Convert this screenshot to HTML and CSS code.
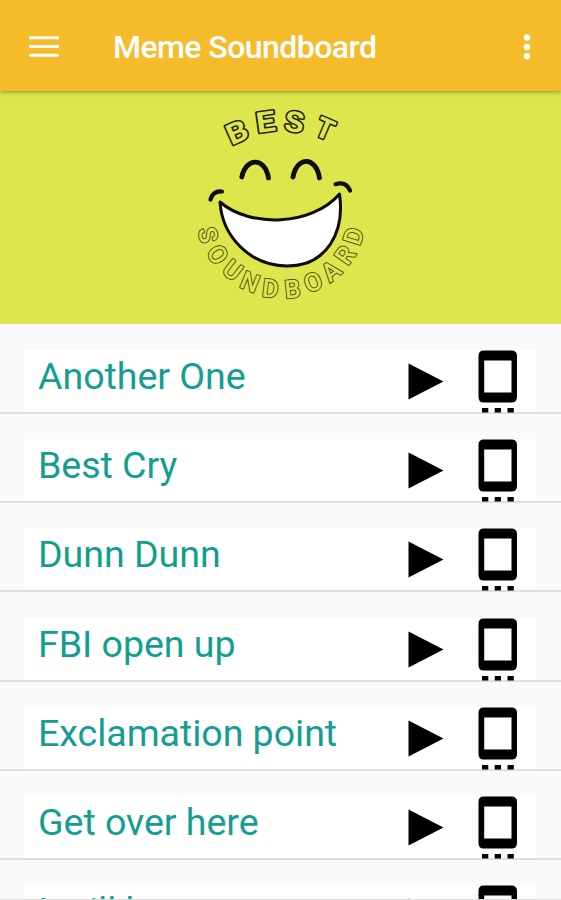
FILE: index.html
```html
<!DOCTYPE html>
<html lang="en">
<head>
    <meta charset="UTF-8">
    <meta name="viewport" content="width=device-width, initial-scale=1.0">
    <title>Meme Soundboard</title>
    <link rel="stylesheet" href="styles.css">
</head>
<body>

    <!-- Icons -->
    <svg class="icon-defs">
        <symbol id="play" viewBox="0 0 36 37">
            <path d="M0.5 0.5 L35.5 18.5 L0.5 36.5 Z"/>
        </symbol>
        <symbol id="phone" viewBox="0 0 40 63">
            <path fill-rule="evenodd" d="M5.5 0.5 H33.5 Q39 0.5 39 6 V47 Q39 52.5 33.5 52.5 H5.5 Q0.5 52.5 0.5 47 V6 Q0.5 0.5 5.5 0.5 Z M6.2 10.5 V42.5 H33.5 V10.5 Z"/>
            <path d="M4 58h6.3v4.5h-6.3z M16.7 58h6.3v4.5h-6.3z M29.5 58h6.3v4.5h-6.3z"/>
        </symbol>
    </svg>

    <!-- Top Bar -->
    <header class="topbar">
        <svg class="menu" viewBox="0 0 30 22">
            <path d="M1.3 1.8H28.7M1.3 10.6H28.7M1.3 19.2H28.7"/>
        </svg>
        <h1>Meme Soundboard</h1>
        <svg class="more" viewBox="0 0 8 26">
            <circle cx="4" cy="3.5" r="3.2"/>
            <circle cx="4" cy="13" r="3.2"/>
            <circle cx="4" cy="22.3" r="3.2"/>
        </svg>
    </header>

    <!-- Logo -->
    <div class="banner">
        <svg viewBox="0 91 561 233">
            <g class="best">
                <text transform="translate(237 132) rotate(-24) scale(1.15 1)" y="10.2">B</text>
                <text transform="translate(265.5 121.5) rotate(-8) scale(1.2 1)" y="10.2">E</text>
                <text transform="translate(294.5 121.5) rotate(6) scale(1.1 1)" y="10.2">S</text>
                <text transform="translate(325 128.5) rotate(23)" y="10.2">T</text>
            </g>
            <g class="soundboard">
                <text transform="translate(208 235) rotate(77)" y="8.8">S</text>
                <text transform="translate(217.5 254.5) rotate(56)" y="8.8">O</text>
                <text transform="translate(232.5 270) rotate(38)" y="8.8">U</text>
                <text transform="translate(250 282) rotate(22)" y="8.8">N</text>
                <text transform="translate(270.5 288.5) rotate(7)" y="8.8">D</text>
                <text transform="translate(292.5 289) rotate(-6)" y="8.8">B</text>
                <text transform="translate(313 282) rotate(-23)" y="8.8">O</text>
                <text transform="translate(331 271) rotate(-39)" y="8.8">A</text>
                <text transform="translate(345 255) rotate(-55)" y="8.8">R</text>
                <text transform="translate(353.5 236) rotate(-73)" y="8.8">D</text>
            </g>
            <g class="face">
                <path d="M241.8 177C246 157 265 157 268.5 178"/>
                <path d="M293 177C297 156 316 156 319.5 178"/>
                <path class="cheek" d="M210.5 199.5Q213 190.5 222 191.5"/>
                <path class="cheek" d="M335.5 184.2Q346 181 350 190.5"/>
                <path class="mouth" d="M220 202C250 228 312 226 339.5 194C345 232 327 266 287 266C250 266 222 236 220 202Z"/>
            </g>
        </svg>
    </div>

    <!-- Sound List -->
    <ul class="sounds">
        <li><div class="sound"><span>Another One</span><svg class="play"><use href="#play"/></svg><svg class="phone"><use href="#phone"/></svg></div></li>
        <li><div class="sound"><span>Best Cry</span><svg class="play"><use href="#play"/></svg><svg class="phone"><use href="#phone"/></svg></div></li>
        <li><div class="sound"><span>Dunn Dunn</span><svg class="play"><use href="#play"/></svg><svg class="phone"><use href="#phone"/></svg></div></li>
        <li><div class="sound"><span>FBI open up</span><svg class="play"><use href="#play"/></svg><svg class="phone"><use href="#phone"/></svg></div></li>
        <li><div class="sound"><span>Exclamation point</span><svg class="play"><use href="#play"/></svg><svg class="phone"><use href="#phone"/></svg></div></li>
        <li><div class="sound"><span>Get over here</span><svg class="play"><use href="#play"/></svg><svg class="phone"><use href="#phone"/></svg></div></li>
        <li><div class="sound"><span>I still here</span><svg class="play"><use href="#play"/></svg><svg class="phone"><use href="#phone"/></svg></div></li>
    </ul>

</body>
</html>
```

FILE: styles.css
```css
/* Base Styling */
* {
    box-sizing: border-box;
}

body {
    font-family: Roboto, 'Liberation Sans', sans-serif;
    margin: 0;
    height: 900px;
    overflow: hidden;
    background-color: #fafafa;
    border-bottom: 1px solid #dcdcdc;
}

.icon-defs {
    display: none;
}

/* Top Bar */
.topbar {
    display: flex;
    align-items: center;
    height: 91px;
    padding: 2px 30px 0 29px;
    background-color: #f5bb2b;
    box-shadow: 0 1px 4px rgba(60, 80, 0, 0.55);
    position: relative;
    z-index: 1;
}

.topbar h1 {
    flex: 1;
    margin: 1px 0 0 54px;
    font-size: 32px;
    font-weight: 500;
    letter-spacing: -0.55px;
    color: #fff;
    white-space: nowrap;
}

.menu {
    width: 30px;
    height: 22px;
    fill: none;
    stroke: #fff;
    stroke-width: 3;
    stroke-linecap: round;
}

.more {
    width: 8px;
    height: 26px;
    fill: #fff;
}

/* Logo */
.banner {
    height: 233px;
    background-color: #dee64d;
}

.banner svg {
    display: block;
    width: 561px;
    height: 233px;
}

/* stroke goes under the fill so only the outer edge shows */
.best,
.soundboard {
    text-anchor: middle;
    fill: #dee64d;
    paint-order: stroke;
    stroke-linejoin: round;
}

.best {
    font-size: 28.5px;
    font-weight: 700;
    stroke: #1c1d08;
    stroke-width: 3px;
}

.soundboard {
    font-size: 25px;
    font-weight: 500;
    stroke: #50541a;
    stroke-width: 2px;
}

.face {
    fill: none;
    stroke: #0d0d06;
    stroke-width: 4.8;
    stroke-linecap: round;
}

.face .cheek {
    stroke-width: 4.2;
}

.face .mouth {
    fill: #fff;
    stroke-width: 3;
    stroke-linejoin: round;
}

/* Sound List */
.sounds {
    list-style: none;
    margin: 0.8px 0 0;
    padding: 0;
}

.sounds li {
    height: 89.2px;
    padding: 25.2px 25px 0 24px;
    border-bottom: 2px solid #dfdfdf;
}

.sound {
    display: flex;
    height: 100%;
    padding: 0 18px 0 14px;
    background-color: #fff;
}

.sound span {
    flex: 1;
    font-size: 37.6px;
    line-height: 53px;
    letter-spacing: -0.05px;
    color: #149e91;
    white-space: nowrap;
}

.play {
    width: 36px;
    height: 37px;
    margin: 13px 34px 0 0;
}

.phone {
    width: 40px;
    height: 63px;
}
```
